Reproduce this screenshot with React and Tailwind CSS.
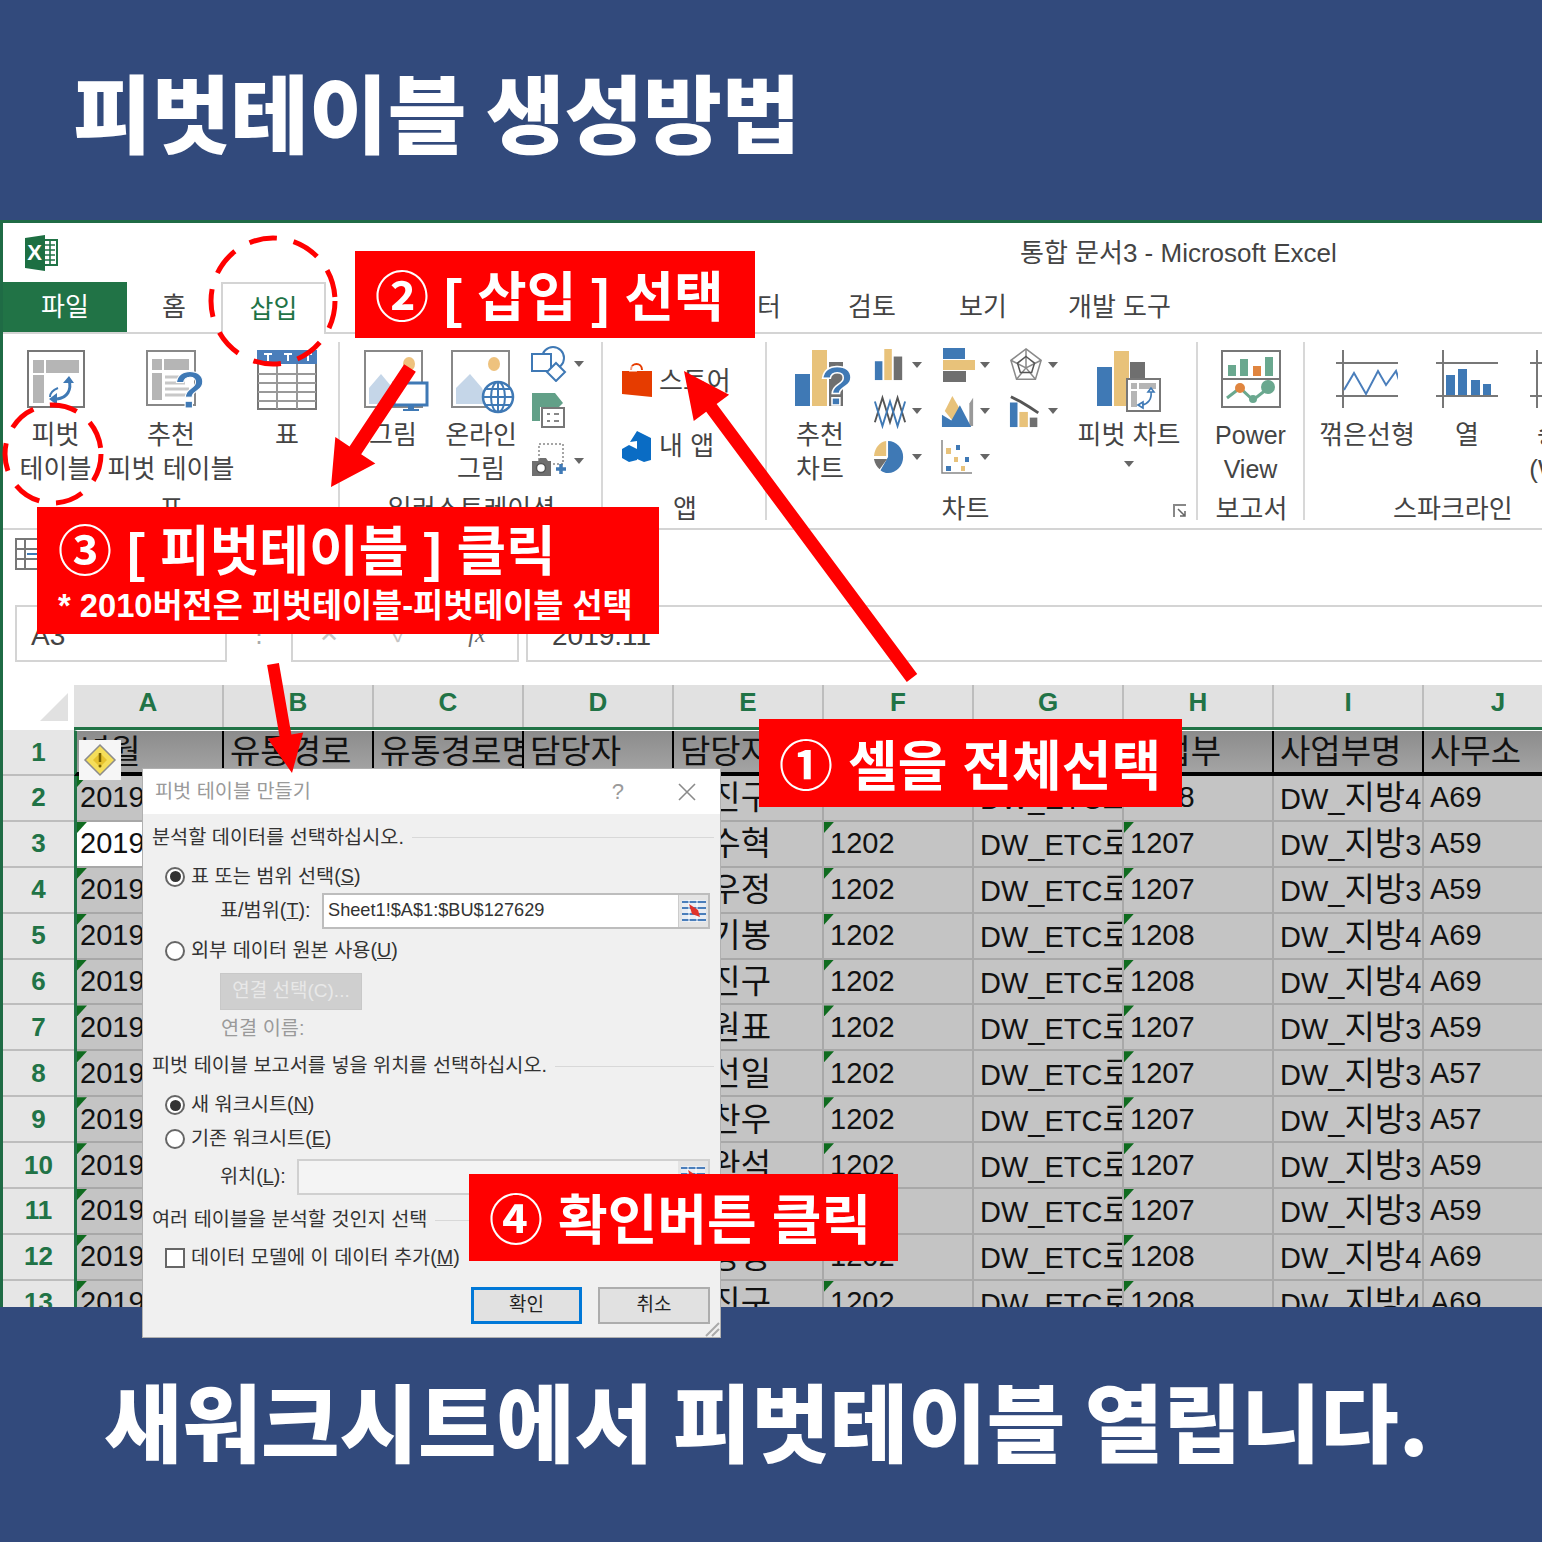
import React from "react";

const GREEN = "#217346";
const BLUE = "#3f79b5";
const TAN = "#e8c27a";
const GRAY = "#6f6f6f";

const columns = ["A", "B", "C", "D", "E", "F", "G", "H", "I", "J"];
const headers = ["년월", "유통경로", "유통경로명", "담당자", "담당자명", "", "", "사업부", "사업부명", "사무소"];

const rows = [
  ["김진구", "1208", "DW_지방4", "A69"],
  ["이수혁", "1207", "DW_지방3", "A59"],
  ["박우정", "1207", "DW_지방3", "A59"],
  ["최기봉", "1208", "DW_지방4", "A69"],
  ["김진구", "1208", "DW_지방4", "A69"],
  ["이원표", "1207", "DW_지방3", "A59"],
  ["박선일", "1207", "DW_지방3", "A57"],
  ["최찬우", "1207", "DW_지방3", "A57"],
  ["정완석", "1207", "DW_지방3", "A59"],
  ["윤정호", "1207", "DW_지방3", "A59"],
  ["한상용", "1208", "DW_지방4", "A69"],
  ["김진구", "1208", "DW_지방4", "A69"],
];

function arrowPoints(x1, y1, x2, y2, w, hw, hl) {
  const len = Math.hypot(x2 - x1, y2 - y1);
  const ux = (x2 - x1) / len;
  const uy = (y2 - y1) / len;
  const nx = -uy;
  const ny = ux;
  const bx = x2 - ux * hl;
  const by = y2 - uy * hl;
  const pts = [
    [x1 + (nx * w) / 2, y1 + (ny * w) / 2],
    [bx + (nx * w) / 2, by + (ny * w) / 2],
    [bx + (nx * hw) / 2, by + (ny * hw) / 2],
    [x2, y2],
    [bx - (nx * hw) / 2, by - (ny * hw) / 2],
    [bx - (nx * w) / 2, by - (ny * w) / 2],
    [x1 - (nx * w) / 2, y1 - (ny * w) / 2],
  ];
  return pts.map((p) => p.join(",")).join(" ");
}

// hangul sits larger than latin in the sheet cells
function mixed(text) {
  return text.split(/([가-힣]+)/).map((part, i) =>
    /[가-힣]/.test(part) ? (
      <span key={i} className="text-[33px]">{part}</span>
    ) : (
      part
    )
  );
}

function Caret({ className = "" }) {
  return (
    <svg width="12" height="8" viewBox="0 0 12 8" className={className}>
      <path d="M1 1h10L6 7z" fill="#666" />
    </svg>
  );
}

function ExcelLogo() {
  return (
    <svg width="36" height="36" viewBox="0 0 36 36">
      <rect x="18" y="5" width="15" height="25" fill="#fff" stroke={GREEN} strokeWidth="2" />
      <path d="M21 10h10M21 15h10M21 20h10M21 25h10M26 6v24" stroke={GREEN} strokeWidth="1.6" />
      <path d="M1 3l20-3v36L1 33z" fill="#1d6f42" />
      <text x="10.5" y="25" textAnchor="middle" fontSize="22" fontWeight="700" fill="#fff" fontFamily="Liberation Sans">X</text>
    </svg>
  );
}

function PivotIcon() {
  return (
    <svg width="58" height="58" viewBox="0 0 58 58">
      <rect x="1" y="1" width="56" height="56" fill="#fff" stroke="#777" strokeWidth="2" />
      <rect x="6" y="10" width="11" height="13" fill="#b5b5b5" />
      <rect x="19" y="10" width="33" height="13" fill="#b5b5b5" />
      <rect x="6" y="25" width="11" height="28" fill="#b5b5b5" />
      <path d="M42 30c3 10-2 18-12 19" fill="none" stroke={BLUE} strokeWidth="3" />
      <path d="M42 26l-6 7h11zM22 49l8-6v12z" fill={BLUE} />
      <path d="M31 38c-5 2-8 5-8 9" fill="none" stroke={BLUE} strokeWidth="2" />
    </svg>
  );
}

function RecommendedPivotIcon() {
  return (
    <svg width="60" height="64" viewBox="0 0 60 64" className="translate-x-[5px]">
      <rect x="1" y="1" width="48" height="54" fill="#fff" stroke="#888" strokeWidth="2" />
      <rect x="6" y="9" width="10" height="11" fill="#b5b5b5" />
      <rect x="18" y="9" width="25" height="11" fill="#b5b5b5" />
      <rect x="6" y="23" width="10" height="27" fill="#b5b5b5" />
      <path d="M19 27h20M19 33h20M19 39h24M19 45h24" stroke="#c8c8c8" strokeWidth="3" />
      <text x="44" y="58" textAnchor="middle" fontSize="52" fontWeight="700" fill={BLUE} stroke="#fff" strokeWidth="1" fontFamily="Liberation Sans">?</text>
    </svg>
  );
}

function TableIcon() {
  return (
    <svg width="60" height="60" viewBox="0 0 60 60">
      <rect x="1" y="1" width="58" height="58" fill="#fff" stroke="#777" strokeWidth="2" />
      <rect x="0" y="0" width="60" height="14" fill="#4a7ebb" />
      <path d="M1 24h58M1 33h58M1 42h58M1 51h58M20 14v45M40 14v45" stroke="#999" strokeWidth="2" />
      <path d="M7 4h8M11 4v7M27 4h8M31 4v7M47 4h8M51 4v7" stroke="#fff" strokeWidth="2" />
    </svg>
  );
}

function PictureIcon() {
  return (
    <svg width="66" height="66" viewBox="0 0 66 66" className="translate-x-[4px]">
      <rect x="1" y="1" width="57" height="56" fill="#fff" stroke="#888" strokeWidth="2" />
      <ellipse cx="45" cy="14" rx="6" ry="7" fill="#eec27e" />
      <path d="M5 54V38L17 24l10 12 5-5 12 23z" fill="#c5d6e8" />
      <rect x="30" y="33" width="33" height="22" fill="#fff" stroke={BLUE} strokeWidth="3" />
      <path d="M44 55h6v4h5v2H39v-2h5z" fill={BLUE} />
    </svg>
  );
}

function OnlinePictureIcon() {
  return (
    <svg width="66" height="66" viewBox="0 0 66 66" className="translate-x-[3px]">
      <rect x="1" y="1" width="57" height="56" fill="#fff" stroke="#888" strokeWidth="2" />
      <ellipse cx="43" cy="14" rx="6" ry="7" fill="#eec27e" />
      <path d="M5 54V38L19 24l12 14 6 16z" fill="#c5d6e8" />
      <circle cx="47" cy="47" r="15" fill="#fff" stroke={BLUE} strokeWidth="2.5" />
      <path d="M32 47h30M35 39h24M35 55h24M47 32v30" stroke={BLUE} strokeWidth="2" />
      <ellipse cx="47" cy="47" rx="7" ry="15" fill="none" stroke={BLUE} strokeWidth="2" />
    </svg>
  );
}

function ShapesIcon() {
  return (
    <svg width="36" height="36" viewBox="0 0 36 36">
      <circle cx="22" cy="12" r="11" fill="none" stroke={BLUE} strokeWidth="2" />
      <rect x="1" y="8" width="19" height="17" fill="#fff" stroke={BLUE} strokeWidth="2" />
      <path d="M25 17l9 9-9 9-9-9z" fill="#fff" stroke={BLUE} strokeWidth="2" />
    </svg>
  );
}

function SmartArtIcon() {
  return (
    <svg width="36" height="36" viewBox="0 0 36 36">
      <path d="M1 1h23l8 10-4 4H9v14H1z" fill="#62a088" />
      <rect x="11" y="16" width="22" height="19" fill="#fff" stroke="#777" strokeWidth="2" />
      <path d="M16 22h3M23 22h5M16 29h3M23 29h5" stroke="#888" strokeWidth="2" />
    </svg>
  );
}

function ScreenshotIcon() {
  return (
    <svg width="36" height="36" viewBox="0 0 36 36">
      <rect x="8" y="1" width="24" height="20" fill="none" stroke="#888" strokeWidth="1.5" strokeDasharray="2 2" />
      <path d="M1 18h6l2-3h6l2 3h3v15H1z" fill="#6f6f6f" />
      <circle cx="10" cy="25" r="4.5" fill="#fff" stroke="#555" strokeWidth="1.5" />
      <path d="M25 26h10M30 21v10" stroke={BLUE} strokeWidth="3.5" />
    </svg>
  );
}

function StoreIcon() {
  return (
    <svg width="32" height="36" viewBox="0 0 32 36">
      <path d="M10 7c0-8 11-8 11 0" fill="none" stroke="#e63c00" strokeWidth="2" />
      <path d="M1 8h30v26L1 31z" fill="#e63c00" />
      <path d="M8 3h8v6H8z" fill="#fff" opacity="0.5" />
    </svg>
  );
}

function MyAppsIcon() {
  return (
    <svg width="32" height="32" viewBox="0 0 32 32">
      <path d="M16 1l14 7v22l-7 2-7-3V16L16 11 9 12z" fill="#0a6cc4" />
      <path d="M8 15l8 4v11l-8 2-7-4v-9z" fill="#0a6cc4" />
    </svg>
  );
}

function ColumnChart() {
  return (
    <svg width="32" height="36" viewBox="0 0 34 36">
      <rect x="2" y="14" width="8" height="20" fill={BLUE} />
      <rect x="12" y="1" width="8" height="33" fill={TAN} />
      <rect x="22" y="9" width="9" height="25" fill={GRAY} />
    </svg>
  );
}

function BarChart() {
  return (
    <svg width="34" height="36" viewBox="0 0 34 36">
      <rect x="2" y="1" width="22" height="11" fill={BLUE} />
      <rect x="2" y="13" width="32" height="10" fill={TAN} />
      <rect x="2" y="24" width="23" height="11" fill={GRAY} />
    </svg>
  );
}

function RadarChart() {
  return (
    <svg width="34" height="36" viewBox="0 0 36 36" fill="none" stroke="#8a8a8a" strokeWidth="1.6">
      <path d="M18 1l16 12-6 20H8L2 13z" />
      <path d="M18 1v20M2 13l16 8 16-8M8 33l10-12 10 12" />
      <path d="M18 9l9 7-3 10H12L9 16z" stroke="#555" />
    </svg>
  );
}

function LineChart() {
  return (
    <svg width="34" height="36" viewBox="0 0 36 36" fill="none" strokeWidth="2">
      <path d="M2 30L10 4l8 26 8-26 8 26" stroke="#555" />
      <path d="M2 8l8 26 8-26 8 26 8-26" stroke={BLUE} />
    </svg>
  );
}

function AreaChart() {
  return (
    <svg width="34" height="36" viewBox="0 0 36 36">
      <path d="M30 10l4-6v30h-4z" fill="#999" />
      <path d="M4 18L12 2l8 14-8 12z" fill={TAN} />
      <path d="M1 35V22l10 6 9-16 12 23z" fill={BLUE} />
    </svg>
  );
}

function ComboChart() {
  return (
    <svg width="34" height="36" viewBox="0 0 36 36">
      <rect x="1" y="9" width="8" height="26" fill={BLUE} />
      <rect x="11" y="19" width="9" height="16" fill={TAN} />
      <rect x="22" y="25" width="8" height="10" fill={GRAY} />
      <path d="M2 3l10 5 10 6 9 6" stroke="#555" strokeWidth="3" fill="none" />
    </svg>
  );
}

function PieChart() {
  return (
    <svg width="32" height="36" viewBox="0 0 34 36">
      <path d="M16 1a16 17 0 0 1 0 34c-3 0-6-1-8-3l8-14z" fill={BLUE} />
      <path d="M14 1v16H1C2 8 7 2 14 1z" fill={TAN} />
      <path d="M1 20h14L7 31c-3-3-5-6-6-11z" fill={GRAY} />
    </svg>
  );
}

function ScatterChart() {
  return (
    <svg width="32" height="36" viewBox="0 0 32 36">
      <path d="M1 1v33h30" fill="none" stroke="#888" strokeWidth="1.5" />
      <rect x="5" y="9" width="5" height="6" fill={TAN} />
      <rect x="15" y="6" width="4" height="5" fill={BLUE} />
      <rect x="13" y="18" width="4" height="5" fill={TAN} />
      <rect x="24" y="18" width="4" height="5" fill={BLUE} />
      <rect x="5" y="27" width="5" height="5" fill={BLUE} />
      <rect x="20" y="27" width="4" height="5" fill={TAN} />
    </svg>
  );
}

function RecommendedChart() {
  return (
    <svg width="60" height="62" viewBox="0 0 60 62" className="translate-x-[5px]">
      <rect x="0" y="24" width="15" height="32" fill={BLUE} />
      <rect x="17" y="0" width="15" height="56" fill={TAN} />
      <rect x="34" y="12" width="14" height="44" fill={GRAY} />
      <text x="42" y="55" textAnchor="middle" fontSize="56" fontWeight="700" fill={BLUE} stroke="#fff" strokeWidth="1.5" fontFamily="Liberation Sans">?</text>
    </svg>
  );
}

function PivotChartIcon() {
  return (
    <svg width="64" height="62" viewBox="0 0 64 62">
      <rect x="0" y="17" width="15" height="39" fill={BLUE} />
      <rect x="17" y="1" width="15" height="55" fill={TAN} />
      <rect x="33" y="12" width="15" height="44" fill={GRAY} />
      <rect x="30" y="29" width="33" height="32" fill="#fff" stroke="#777" strokeWidth="2" />
      <rect x="34" y="33" width="6" height="6" fill="#b5b5b5" />
      <rect x="42" y="33" width="17" height="6" fill="#b5b5b5" />
      <rect x="34" y="41" width="6" height="16" fill="#b5b5b5" />
      <path d="M54 42c1 7-3 12-9 13M54 38l-3 4h6zM41 55l5-3v6z" fill="none" stroke={BLUE} strokeWidth="1.6" />
    </svg>
  );
}

function PowerViewIcon() {
  return (
    <svg width="60" height="58" viewBox="0 0 60 58">
      <rect x="1" y="1" width="58" height="56" fill="#fff" stroke="#777" strokeWidth="2" />
      <path d="M1 29h58" stroke="#777" strokeWidth="2" />
      <rect x="7" y="15" width="8" height="11" fill="#6aa88f" />
      <rect x="19" y="9" width="8" height="17" fill="#6aa88f" />
      <rect x="32" y="16" width="8" height="10" fill="#e0853f" />
      <rect x="44" y="7" width="8" height="19" fill="#6aa88f" />
      <path d="M6 48l13-10 13 12 18-14" fill="none" stroke="#6aa88f" strokeWidth="3" />
      <circle cx="19" cy="38" r="5" fill="#e0853f" />
      <circle cx="32" cy="49" r="4" fill="#6aa88f" />
      <circle cx="47" cy="37" r="7" fill="#6aa88f" />
    </svg>
  );
}

function LineSpark() {
  return (
    <svg width="62" height="58" viewBox="0 0 62 58" fill="none">
      <path d="M7 0v58M0 13h62M0 46h62" stroke="#777" strokeWidth="2" />
      <path d="M8 40l10-17 12 21 12-23 8 14 10-14 4 12" stroke="#4a7ebb" strokeWidth="2" />
    </svg>
  );
}

function ColumnSpark() {
  return (
    <svg width="62" height="58" viewBox="0 0 62 58">
      <path d="M7 0v58M0 13h62M0 46h62" stroke="#777" strokeWidth="2" />
      <rect x="10" y="25" width="9" height="20" fill={BLUE} />
      <rect x="22" y="19" width="9" height="26" fill={BLUE} />
      <rect x="35" y="30" width="9" height="15" fill={BLUE} />
      <rect x="47" y="34" width="8" height="11" fill={BLUE} />
    </svg>
  );
}

function WinLossSpark() {
  return (
    <svg width="62" height="58" viewBox="0 0 62 58">
      <path d="M7 0v58M0 13h62M0 46h62" stroke="#777" strokeWidth="2" />
      <rect x="12" y="15" width="9" height="14" fill={BLUE} />
    </svg>
  );
}

function GridIcon() {
  return (
    <svg width="26" height="32" viewBox="0 0 26 32">
      <rect x="1" y="1" width="24" height="30" fill="#fff" stroke="#777" strokeWidth="2" />
      <path d="M1 11h24M1 21h24M10 1v30" stroke="#777" strokeWidth="2" />
      <path d="M12 16h10" stroke={BLUE} strokeWidth="2" />
    </svg>
  );
}

function WarningBadge() {
  return (
    <svg width="42" height="40" viewBox="0 0 42 40">
      <rect width="42" height="40" fill="#f6f6f6" />
      <path d="M21 5l15 15-15 15L6 20z" fill="#f5de5a" stroke="#8c8c8c" strokeWidth="1.5" />
      <path d="M14 20l7-7 7 7-7 7z" fill="#e6c22e" />
      <path d="M21 13v9" stroke="#7a6200" strokeWidth="2.5" />
      <circle cx="21" cy="26" r="1.5" fill="#7a6200" />
    </svg>
  );
}

function RefPicker() {
  return (
    <svg width="24" height="22" viewBox="0 0 24 22">
      <rect x="0" y="0" width="24" height="22" fill="#e8edf4" />
      <path d="M0 2h24M0 8h24M0 14h24M0 20h24" stroke="#4a7ebb" strokeWidth="2" />
      <path d="M7 0v22M15 0v22" stroke="#fff" strokeWidth="1" />
      <path d="M7 4l9 6 2 7-8-3z" fill="#e0332b" />
    </svg>
  );
}

function RibbonButton({ width, icon, lines, caret, latin }) {
  return (
    <div className="flex shrink-0 flex-col items-center" style={{ width }}>
      <div className="flex h-[58px] items-start justify-center">{icon}</div>
      <div className={`mt-[10px] text-center leading-[34px] text-[#444] ${latin ? "text-[25px]" : "text-[26px]"}`}>
        {lines.map((l) => (
          <div key={l} className="whitespace-nowrap">{l}</div>
        ))}
        {caret && <Caret className="mx-auto mt-[8px]" />}
      </div>
    </div>
  );
}

function Group({ width, label, children, last, labelClass = "" }) {
  return (
    <div className="relative flex h-[176px] shrink-0 flex-col" style={{ width }}>
      <div className="flex h-[140px] flex-1">{children}</div>
      <div className={`h-[34px] overflow-hidden text-center text-[26px] leading-[35px] text-[#444] ${labelClass}`}>{label}</div>
      {!last && <div className="absolute right-0 top-[-8px] h-[178px] w-[2px] bg-[#d8d8d8]" />}
    </div>
  );
}

function Tab({ width, children, active, file }) {
  let cls = "text-[#444]";
  if (file) cls = "bg-[#217346] text-white";
  if (active) cls = "relative -mb-[2px] border-2 border-b-0 border-[#d4d4d4] bg-white text-[#217346]";
  return (
    <div className={`flex shrink-0 items-center justify-center whitespace-nowrap text-[26px] ${cls}`} style={{ width }}>
      {children}
    </div>
  );
}

function MiniChart({ icon }) {
  return (
    <div className="flex h-[46px] w-[68px] items-center gap-[4px]">
      <div className="flex w-[34px] justify-start">{icon}</div>
      <Caret />
    </div>
  );
}

function Cell({ children, dark, white, flag, first }) {
  let bg = "bg-[#c4c4c4] border-r-2 border-b-2 border-[#a8a8a8] text-[#111]";
  if (dark) bg = "bg-linear-to-b from-[#8c8c8c] to-[#a4a4a4] border-r-2 border-[#000] text-[#111]";
  if (white) bg = "bg-white border-r-2 border-b-2 border-[#a8a8a8] text-[#111]";
  const size = first ? "w-[147px] pl-[3px]" : "w-[150px] pl-[6px]";
  return (
    <div className={`relative flex h-full shrink-0 items-center overflow-hidden whitespace-nowrap text-[29px] ${size} ${bg}`}>
      {flag && <div className="absolute left-0 top-0 h-[11px] w-[10px] bg-[#0f6b1f] [clip-path:polygon(0_0,100%_0,0_100%)]" />}
      <span className="leading-none">{mixed(children)}</span>
    </div>
  );
}

function RadioRow({ checked, label, height }) {
  return (
    <div className="flex items-center gap-[6px] pl-[22px] text-[19.7px] text-[#333]" style={{ height }}>
      <div className="flex size-[20px] items-center justify-center rounded-full border-2 border-[#666] bg-white">
        {checked && <div className="size-[11px] rounded-full bg-[#333]" />}
      </div>
      <span>{label}</span>
    </div>
  );
}

function SectionLabel({ children, height }) {
  return (
    <div className="flex items-center gap-[8px] pl-[9px] pr-[6px] text-[19.7px] text-[#333]" style={{ height }}>
      <span className="whitespace-nowrap">{children}</span>
      <div className="h-[1px] flex-1 bg-[#d8d8d8]" />
    </div>
  );
}

function Dialog() {
  return (
    <div className="absolute left-[142px] top-[768px] h-[570px] w-[579px] overflow-hidden border border-[#b0b0b0] bg-[#f0f0f0]">
      <div className="flex h-[45px] items-center justify-between bg-white pl-[12px] pr-[24px] text-[19.7px] text-[#9a9a9a]">
        <span>피벗 테이블 만들기</span>
        <div className="flex items-center gap-[54px]">
          <span className="text-[22px]">?</span>
          <svg width="18" height="18" viewBox="0 0 18 18"><path d="M1 1l16 16M17 1L1 17" stroke="#8a8a8a" strokeWidth="1.6" /></svg>
        </div>
      </div>
      <SectionLabel height={47}>분석할 데이터를 선택하십시오.</SectionLabel>
      <RadioRow checked height={31} label={<>표 또는 범위 선택(<u>S</u>)</>} />
      <div className="flex h-[38px] items-center text-[19.7px] text-[#333]">
        <span className="w-[172px] pl-[77px]">표/범위(<u>T</u>):</span>
        <div className="ml-[7px] flex h-[36px] w-[388px] items-center justify-between border-2 border-[#bdbdbd] bg-white pl-[4px] text-[18.2px]">
          <span>Sheet1!$A$1:$BU$127629</span>
          <div className="flex h-full w-[30px] items-center justify-center border-l border-[#ccc] bg-[#e4e4e4]"><RefPicker /></div>
        </div>
      </div>
      <RadioRow height={41} label={<>외부 데이터 원본 사용(<u>U</u>)</>} />
      <div className="flex h-[40px] items-center pl-[77px]">
        <div className="flex h-[37px] w-[142px] items-center justify-center border border-[#c8c8c8] bg-[#cfcfcf] text-[19px] text-[#e8e8e8]">연결 선택(C)...</div>
      </div>
      <div className="flex h-[35px] items-center pl-[78px] text-[19.7px] text-[#9a9a9a]">연결 이름:</div>
      <SectionLabel height={40}>피벗 테이블 보고서를 넣을 위치를 선택하십시오.</SectionLabel>
      <RadioRow checked height={38} label={<>새 워크시트(<u>N</u>)</>} />
      <RadioRow height={30} label={<>기존 워크시트(<u>E</u>)</>} />
      <div className="flex h-[46px] items-center text-[19.7px] text-[#333]">
        <span className="w-[154px] pl-[77px]">위치(<u>L</u>):</span>
        <div className="flex h-[36px] w-[413px] justify-between border-2 border-[#d0d0d0] bg-[#f4f4f4]">
          <span />
          <div className="flex h-full w-[30px] items-center justify-center bg-[#e4e4e4]"><RefPicker /></div>
        </div>
      </div>
      <SectionLabel height={40}>여러 테이블을 분석할 것인지 선택</SectionLabel>
      <div className="flex h-[36px] items-center gap-[6px] pl-[22px] text-[19.7px] text-[#333]">
        <div className="size-[20px] border-2 border-[#666] bg-white" />
        <span>데이터 모델에 이 데이터 추가(<u>M</u>)</span>
      </div>
      <div className="flex justify-end gap-[16px] pr-[10px] pt-[11px] text-[19px] text-[#222]">
        <div className="flex h-[37px] w-[111px] items-center justify-center border-[3px] border-[#0078d7] bg-[#e1e1e1]">확인</div>
        <div className="flex h-[37px] w-[112px] items-center justify-center border-2 border-[#adadad] bg-[#e1e1e1]">취소</div>
      </div>
      <svg width="16" height="16" viewBox="0 0 16 16" className="absolute bottom-0 right-0">
        <path d="M15 2L2 15M15 8l-7 7" stroke="#aaa" strokeWidth="2" />
      </svg>
    </div>
  );
}

function Callout({ className, children }) {
  return (
    <div className={`absolute flex items-center bg-[#ff0000] pl-[20px] pt-[8px] text-[54px] font-bold whitespace-nowrap text-white ${className}`}>
      {children}
    </div>
  );
}

function Excel() {
  return (
    <div className="h-[1087px] overflow-hidden border-l-[3px] border-t-[3px] border-[#1f6b45] bg-white">
      <div className="relative flex h-[59px] items-center pl-[21px]">
        <ExcelLogo />
        <div className="absolute left-[1017px] top-[12px] whitespace-nowrap text-[26px] leading-[36px] text-[#444]">통합 문서3 - Microsoft Excel</div>
      </div>
      <div className="flex h-[52px] border-b-2 border-[#d4d4d4]">
        <Tab file width={124}>파일</Tab>
        <div className="flex w-[94px] items-center justify-center text-[26px] text-[#444]">홈</div>
        <Tab active width={105}>삽입</Tab>
        <div className="flex items-center text-[26px] text-[#444]">
          <span className="w-[300px] shrink-0" />
          <span className="w-[155px] shrink-0 text-right">데이터</span>
          <span className="ml-[67px] w-[50px] shrink-0">검토</span>
          <span className="ml-[61px] w-[50px] shrink-0">보기</span>
          <span className="ml-[59px] whitespace-nowrap">개발 도구</span>
        </div>
      </div>
      <div className="flex h-[196px] border-b-2 border-[#d4d4d4] pt-[16px]">
        <Group width={337} label="표">
          <RibbonButton width={105} icon={<PivotIcon />} lines={["피벗", "테이블"]} />
          <RibbonButton width={126} icon={<RecommendedPivotIcon />} lines={["추천", "피벗 테이블"]} />
          <RibbonButton width={106} icon={<TableIcon />} lines={["표"]} />
        </Group>
        <Group width={263} label="일러스트레이션">
          <RibbonButton width={106} icon={<PictureIcon />} lines={["그림"]} />
          <RibbonButton width={70} icon={<OnlinePictureIcon />} lines={["온라인", "그림"]} />
          <div className="-mt-[4px] flex flex-col gap-[10px] pl-[15px]">
            <div className="flex h-[36px] items-center gap-[6px]"><ShapesIcon /><Caret /></div>
            <div className="flex h-[36px] items-center"><SmartArtIcon /></div>
            <div className="mt-[5px] flex h-[36px] items-center gap-[6px]"><ScreenshotIcon /><Caret /></div>
          </div>
        </Group>
        <Group width={164} label="앱">
          <div className="flex flex-col gap-[29px] pl-[18px] pt-[13px] text-[26px] text-[#444]">
            <div className="flex h-[36px] items-center gap-[6px]"><StoreIcon />스토어</div>
            <div className="flex h-[36px] items-center gap-[6px]"><MyAppsIcon />내 앱</div>
          </div>
        </Group>
        <Group width={431} label="차트" labelClass="pr-[34px]">
          <RibbonButton width={106} icon={<RecommendedChart />} lines={["추천", "차트"]} />
          <div className="-mt-[8px] grid h-[138px] w-[204px] shrink-0 grid-cols-3 content-start">
            <MiniChart icon={<ColumnChart />} />
            <MiniChart icon={<BarChart />} />
            <MiniChart icon={<RadarChart />} />
            <MiniChart icon={<LineChart />} />
            <MiniChart icon={<AreaChart />} />
            <MiniChart icon={<ComboChart />} />
            <MiniChart icon={<PieChart />} />
            <MiniChart icon={<ScatterChart />} />
          </div>
          <RibbonButton width={104} icon={<PivotChartIcon />} lines={["피벗 차트"]} caret />
          <svg width="14" height="14" viewBox="0 0 14 14" className="absolute bottom-[8px] right-[11px]">
            <path d="M1 13V1h12" fill="none" stroke="#888" strokeWidth="2" />
            <path d="M5 5l7 7M12 7v5H7" fill="none" stroke="#666" strokeWidth="1.5" />
          </svg>
        </Group>
        <Group width={107} label="보고서">
          <RibbonButton width={105} latin icon={<PowerViewIcon />} lines={["Power", "View"]} />
        </Group>
        <Group width={240} last label="스파크라인" labelClass="whitespace-nowrap pl-[88px] text-left">
          <RibbonButton width={124} icon={<LineSpark />} lines={["꺾은선형"]} />
          <RibbonButton width={76} icon={<ColumnSpark />} lines={["열"]} />
          <RibbonButton width={112} icon={<WinLossSpark />} lines={["승패", "(W/L)"]} />
        </Group>
      </div>
      <div className="h-[75px] pl-[12px] pt-[8px]">
        <GridIcon />
      </div>
      <div className="flex h-[57px] text-[#444]">
        <div className="ml-[12px] flex w-[212px] shrink-0 items-center border-2 border-[#d4d4d4] pl-[14px] pt-[4px] text-[28px]">A3</div>
        <div className="flex w-[64px] shrink-0 items-center justify-center text-[24px] text-[#aaa]">⋮</div>
        <div className="flex w-[228px] shrink-0 items-center border-2 border-[#d4d4d4] text-[24px] text-[#c4c4c4]">
          <span className="w-[72px] text-center">✕</span>
          <span className="w-[72px] text-center">✓</span>
          <span className="w-[80px] text-center font-['Liberation_Serif'] italic text-[#666]">fx</span>
        </div>
        <div className="ml-[7px] flex flex-1 items-center border-2 border-r-0 border-[#d4d4d4] pl-[24px] pt-[4px] text-[28px]">2019.11</div>
      </div>
      <div className="h-[23px]" />
      <div className="flex h-[42px]">
        <div className="flex w-[71px] shrink-0 items-start justify-end pr-[6px] pt-[8px]">
          <div className="size-[28px] bg-[#e1e1e1] [clip-path:polygon(100%_0,100%_100%,0_100%)]" />
        </div>
        {columns.map((c) => (
          <div key={c} className="flex w-[150px] shrink-0 items-center justify-center border-r-2 border-[#bdbdbd] bg-[#e1e1e1] pb-[8px] text-[26px] font-bold text-[#217346]">
            {c}
          </div>
        ))}
      </div>
      <div className="ml-[71px] h-[3px] bg-[#217346]" />
      <div className="flex h-[46px]">
        <div className="flex w-[71px] shrink-0 items-center justify-center border-b-2 border-[#bdbdbd] bg-[#e6e6e6] text-[26px] font-bold text-[#217346]">1</div>
        <div className="flex border-b-[4px] border-l-[3px] border-t border-b-black border-l-[#217346] border-t-white">
          {headers.map((h, i) => (
            <Cell key={i} dark first={i === 0}>{h}</Cell>
          ))}
        </div>
      </div>
      {rows.map((r, i) => (
        <div key={i} className="flex h-[45.9px]">
          <div className="flex w-[71px] shrink-0 items-center justify-center border-b-2 border-[#bdbdbd] bg-[#e6e6e6] text-[26px] font-bold text-[#217346]">{i + 2}</div>
          <div className="flex border-l-[3px] border-[#217346]">
            <Cell flag first white={i === 1}>2019.11</Cell>
            <Cell>온라인</Cell>
            <Cell>온라인</Cell>
            <Cell>A001</Cell>
            <Cell>{r[0]}</Cell>
            <Cell flag>1202</Cell>
            <Cell>DW_ETC로컬</Cell>
            <Cell flag>{r[1]}</Cell>
            <Cell>{r[2]}</Cell>
            <Cell>{r[3]}</Cell>
          </div>
        </div>
      ))}
    </div>
  );
}

export default function App() {
  return (
    <div className="relative h-[1542px] w-[1542px] overflow-hidden bg-[#324a7c] font-['Liberation_Sans','Noto_Sans_CJK_KR',sans-serif]">
      <div className="flex h-[220px] items-center pl-[73px] font-['Noto_Sans_CJK_KR',sans-serif] text-[85.5px] font-black whitespace-nowrap text-white">
        피벗테이블 생성방법
      </div>
      <Excel />
      <div className="flex h-[235px] items-center pb-[10px] pl-[104px] font-['Noto_Sans_CJK_KR',sans-serif] text-[85.3px] font-black whitespace-nowrap text-white">
        새워크시트에서 피벗테이블 열립니다.
      </div>

      <div className="absolute left-[79px] top-[740px]"><WarningBadge /></div>
      <Dialog />

      <Callout className="left-[355px] top-[251px] h-[87px] w-[400px]">② [ 삽입 ] 선택</Callout>
      <div className="absolute left-[37px] top-[507px] flex h-[127px] w-[622px] flex-col bg-[#ff0000] pl-[21px] font-bold whitespace-nowrap text-white">
        <div className="h-[78px] pt-[7px] text-[54px] leading-[76px]">③ [ 피벗테이블 ] 클릭</div>
        <div className="text-[32.7px] leading-[42px]">* 2010버전은 피벗테이블-피벗테이블 선택</div>
      </div>
      <Callout className="left-[759px] top-[719px] h-[88px] w-[423px]">① 셀을 전체선택</Callout>
      <Callout className="left-[469px] top-[1174px] h-[87px] w-[429px]">④ 확인버튼 클릭</Callout>

      <svg width="1542" height="1542" viewBox="0 0 1542 1542" className="pointer-events-none absolute left-0 top-0">
        <polygon points={arrowPoints(410, 368, 331, 487, 14, 48, 44)} fill="#ff0000" />
        <polygon points={arrowPoints(912, 678, 684, 371, 13, 44, 46)} fill="#ff0000" />
        <polygon points={arrowPoints(273, 664, 292, 773, 12, 36, 38)} fill="#ff0000" />
        <ellipse cx="273" cy="301" rx="62" ry="63" fill="none" stroke="#ff0000" strokeWidth="5" strokeDasharray="28 17" />
        <ellipse cx="53" cy="454" rx="48" ry="49" fill="none" stroke="#ff0000" strokeWidth="5" strokeDasharray="28 17" />
      </svg>
    </div>
  );
}
